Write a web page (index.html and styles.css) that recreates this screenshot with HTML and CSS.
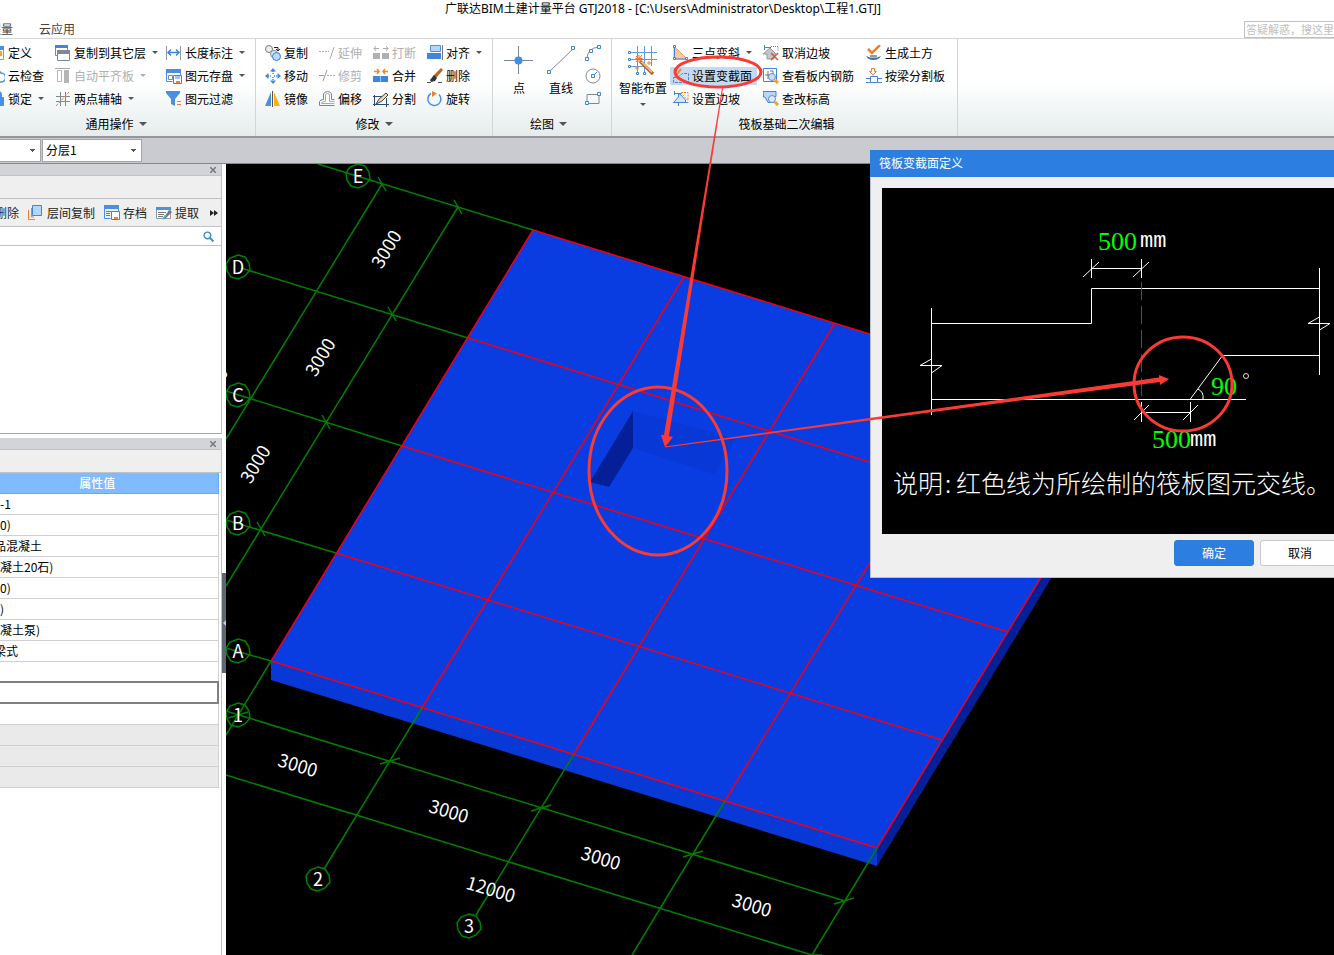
FILE: index.html
```html
<!DOCTYPE html>
<html lang="zh-CN">
<head>
    <meta charset="UTF-8">
    <meta name="viewport" content="width=device-width, initial-scale=1.0">
    <title>广联达BIM土建计量平台 GTJ2018</title>
    <link rel="stylesheet" href="styles.css">
</head>
<body>
<header class="title-bar">广联达BIM土建计量平台 GTJ2018 - [C:\Users\Administrator\Desktop\工程1.GTJ]</header>

<nav class="tabs">
    <a href="#">工程量</a>
    <a href="#">云应用</a>
    <input class="help-search" type="text" aria-label="答疑解惑" placeholder="答疑解惑，搜这里">
</nav>

<div class="ribbon">
    <section class="group group-common">
        <div class="group-body">
            <div class="col col-a">
                <button><svg class="icon" viewBox="0 0 16 16"><path d="M1 1h14v4H1z" fill="#4a90e2"/><path d="M1.500 5v9.500h13V5" fill="#fff" stroke="#8c9aa3"/><path d="M8 6h5v5H8z" fill="#f5a623"/></svg>定义</button>
                <button><svg class="icon" viewBox="0 0 16 16"><path d="M5 14a4 4 0 0 1 0-8 4 4 0 0 1 7-1 4.500 4.500 0 0 1 0 9z" fill="none" stroke="#4a90e2" stroke-width="1.500"/></svg>云检查</button>
                <button><svg class="icon" viewBox="0 0 16 16"><path d="M6 7V4a3 3 0 0 1 6 0v3" fill="none" stroke="#4a90e2" stroke-width="2"/><rect x="3" y="6" width="12" height="9" rx="1" fill="#4a90e2"/></svg>锁定<i class="caret"></i></button>
            </div>
            <div class="col col-b">
                <button><svg class="icon" viewBox="0 0 16 16"><path d="M.5 2v8.500H3M12.500 3v3" fill="none" stroke="#4a90e2"/><path d="M0 0h13v3H0z" fill="#3f85dc"/><path d="M2.500 7v8.500h12V7" fill="#fff" stroke="#7b8a96"/><path d="M2 5h13v4H2z" fill="#7b8a96"/></svg>复制到其它层<i class="caret"></i></button>
                <button disabled><svg class="icon" viewBox="0 0 16 16"><path d="M0 .5h15" stroke="#aaa"/><path d="M2.500 2.500h4v11h-4z" fill="none" stroke="#b5b5b5"/><path d="M9 2h5v13H9z" fill="#b5b5b5"/></svg>自动平齐板<i class="caret"></i></button>
                <button><svg class="icon" viewBox="0 0 16 16"><path d="M5.500 1v14M10.500 1v14M1 5.500h14M1 10.500h14" stroke="#7b8a96"/><path d="M1 15 14 1" stroke="#f08030" stroke-dasharray="3 1"/></svg>两点辅轴<i class="caret"></i></button>
            </div>
            <div class="col col-c">
                <button><svg class="icon" viewBox="0 0 16 16"><path d="M.5 1v14M14.500 1v14" stroke="#8c9aa3"/><path d="M2 7.500h11M5 4.500l-3 3 3 3M10 4.500l3 3-3 3" fill="none" stroke="#3f85dc" stroke-width="1.500"/></svg>长度标注<i class="caret"></i></button>
                <button><svg class="icon" viewBox="0 0 16 16"><path d="M.5 4v9.500h6M14.500 4v3" fill="none" stroke="#4a90e2"/><path d="M0 1h15v4H0z" fill="#4a90e2"/><path d="M2.500 7.500h4v4h-4z" fill="none" stroke="#7b8a96"/><path d="M7.500 7.500h8v8h-8z" fill="#fff" stroke="#3f85dc"/><path d="M9 8h5v3H9z" fill="#9cc5f5"/><path d="M10 13h4v2h-4z" fill="#f08030"/></svg>图元存盘<i class="caret"></i></button>
                <button><svg class="icon" viewBox="0 0 16 16"><path d="M0 0h14v2L9 8v7l-4-2V8L0 2z" fill="#4a90e2"/><path d="M11 10.500h4M11 13.500h4" stroke="#f08030"/></svg>图元过滤</button>
            </div>
        </div>
        <h2>通用操作<i class="caret big"></i></h2>
    </section>

    <section class="group group-edit">
        <div class="group-body">
            <div class="col col-d">
                <button><svg class="icon" viewBox="0 0 16 16"><circle cx="4" cy="4" r="3.500" fill="#eee" stroke="#777"/><path d="M9 2.500h4v3M11 4l2 2 2-2" fill="none" stroke="#222"/><circle cx="9" cy="9" r="3.500" fill="#eee" stroke="#7b8a96"/><circle cx="11.500" cy="11.500" r="4" fill="#b9d8fb" stroke="#2f7fd4"/></svg>复制</button>
                <button><svg class="icon" viewBox="0 0 16 16"><path d="M8 0l3 3.500H5zM8 16l3-3.500H5zM0 8l3.500-3v6zM16 8l-3.500-3v6z" fill="#3f85dc"/><path d="M8 3v4M8 9v4M3 8h4M9 8h4" stroke="#3f85dc" stroke-width="1.500" stroke-dasharray="1 1"/></svg>移动</button>
                <button><svg class="icon" viewBox="0 0 16 16"><path d="M6 1v14H0z" fill="#4a90e2"/><path d="M7.500 0v16" stroke="#555"/><path d="M9 1v14h6z" fill="#f7b21a"/></svg>镜像</button>
            </div>
            <div class="col col-d">
                <button disabled><svg class="icon" viewBox="0 0 16 16"><path d="M0 6.500h10" stroke="#aaa" stroke-dasharray="2 1"/><path d="M11 14l4-12" stroke="#aaa"/></svg>延伸</button>
                <button disabled><svg class="icon" viewBox="0 0 16 16"><path d="M0 7.500h5M4 13l4-11" stroke="#999"/><path d="M8 7.500h8" stroke="#aaa" stroke-dasharray="2 1"/></svg>修剪</button>
                <button><svg class="icon" viewBox="0 0 16 16"><path d="M15.500 14.500H.5v-4q1-2 4-2V3q1-2.500 4-2.500t4 2.500v5.500h3" fill="none" stroke="#4a90e2"/><path d="M15.500 12.500h-13q0-2 4-2V4q0-1.500 2-1.500t2 1.500v6.500h5" fill="#fff" stroke="#e3a33b"/></svg>偏移</button>
            </div>
            <div class="col col-d">
                <button disabled><svg class="icon" viewBox="0 0 16 16"><path d="M0 8h7v6H0zM9 8h7v6H9z" fill="#b0b0b0"/><path d="M1 3.500h5M15 3.500h-5M3 1 1 3.500 3 6M13 1l2 2.500L13 6" fill="none" stroke="#aaa"/></svg>打断</button>
                <button><svg class="icon" viewBox="0 0 16 16"><path d="M0 8h15v6H0z" fill="#3f85dc"/><path d="M7.500 8v6" stroke="#9cc5f5"/><path d="M1 3.500h5M15 3.500h-5M4 1l2 2.500L4 6M12 1l-2 2.500L12 6" fill="none" stroke="#f08a1d" stroke-width="1.500"/></svg>合并</button>
                <button><svg class="icon" viewBox="0 0 16 16"><path d="M0 5.500h10M1.500 4v11M0 13.500h16M13.500 7v9" fill="none" stroke="#2c4a75"/><path d="M3 13l3-5 7-6 2 2-6 6z" fill="#f1d5b0" stroke="#444"/></svg>分割</button>
            </div>
            <div class="col col-e">
                <button><svg class="icon" viewBox="0 0 16 16"><path d="M3.500.5h10v6h-10z" fill="#b5d5fa" stroke="#4a90e2"/><path d="M0 8h14v6H0z" fill="#3f85dc"/><path d="M15.500 0v15" stroke="#777"/></svg>对齐<i class="caret"></i></button>
                <button><svg class="icon" viewBox="0 0 16 16"><path d="M14 0l2 2-7 8-3-2z" fill="#b5652b"/><path d="M7 7l3 3-2 3-4 1-1-2z" fill="#333"/><path d="M0 14.500h4M11 14.500h4" stroke="#555"/></svg>删除</button>
                <button><svg class="icon" viewBox="0 0 16 16"><path d="M4 2.500a6.500 6.500 0 1 0 8 1" fill="none" stroke="#4a90e2" stroke-width="1.500"/><path d="M5 0l5 2.500L5 6z" fill="#f08030"/></svg>旋转</button>
            </div>
        </div>
        <h2>修改<i class="caret big"></i></h2>
    </section>

    <section class="group group-draw">
        <div class="group-body">
            <button class="large"><svg class="icon-large" viewBox="0 0 30 30"><path d="M14.500 1v28M0 15.500h29" stroke="#7b8a96"/><circle cx="14.500" cy="15.500" r="4" fill="#3f8ee8"/></svg>点</button>
            <button class="large"><svg class="icon-large" viewBox="0 0 30 30"><path d="M3 27 27 4" stroke="#7b8a96"/><path d="M1.500 25.500h3v3h-3zM25.500 1.500h3v3h-3z" fill="#fff" stroke="#3f85dc"/></svg>直线</button>
            <div class="col col-shapes">
                <button aria-label="弧"><svg class="icon" viewBox="0 0 16 16"><path d="M2 14Q2 3 14 2" fill="none" stroke="#7b8a96"/><path d="M.5 12.500h3v3h-3zM4.500 4.500h3v3h-3zM12.500.5h3v3h-3z" fill="#fff" stroke="#3f85dc"/></svg></button>
                <button aria-label="圆"><svg class="icon" viewBox="0 0 16 16"><circle cx="8" cy="8" r="7" fill="none" stroke="#7b8a96"/><path d="M8 8l4-4" stroke="#3f85dc"/><path d="M6.500 6.500h3v3h-3z" fill="#fff" stroke="#3f85dc"/></svg></button>
                <button aria-label="矩形"><svg class="icon" viewBox="0 0 16 16"><path d="M2 3.500h12v9H2z" fill="none" stroke="#7b8a96"/><path d="M.5 10.500h3v3h-3zM12.500 1.500h3v3h-3z" fill="#fff" stroke="#3f85dc"/></svg></button>
            </div>
        </div>
        <h2>绘图<i class="caret big"></i></h2>
    </section>

    <section class="group group-raft">
        <div class="group-body">
            <button class="large wide"><svg class="icon-large" viewBox="0 0 30 30"><path d="M9.500 1v28M16.500 1v28M23.500 1v20M1 7.500h28M1 14.500h28M1 21.500h16" stroke="#5a9be8"/><path d="M.5 6.500h2v2h-2zM.5 13.500h2v2h-2zM.5 20.500h2v2h-2zM8.500 27.500h2v2h-2zM15.500 27.500h2v2h-2z" fill="#fff" stroke="#3f85dc"/><path d="M12 16l13 13" stroke="#a86b35" stroke-width="3.500"/><path d="M13 16l11 11" stroke="#f0b478" stroke-width="2"/><path d="M11 10v7M7.500 13.500h7M8 11l6 6M14 10l-6 7" stroke="#f07030"/><path d="M21 16v4M19 18h4M9 21v4M7 23h4" stroke="#f08030"/></svg>智能布置<i class="caret"></i></button>
            <div class="col col-f">
                <button><svg class="icon" viewBox="0 0 16 16"><path d="M1 1v13h13z" fill="#fcc7a0" stroke="#f0a070"/><path d="M1.500 2v12H14" fill="none" stroke="#3f85dc"/><path d="M.5.5h2v2h-2zM.5 12.500h2v2h-2zM12.500 12.500h2v2h-2z" fill="#fff" stroke="#3f85dc"/></svg>三点变斜<i class="caret"></i></button>
                <button class="active"><svg class="icon" viewBox="0 0 16 16"><path d="M.5 9.500h4l5-4h6v9H.5z" fill="none" stroke="#3f85dc" stroke-dasharray="3 1"/><path d="M2 9l6-8" stroke="#f08a1d" stroke-width="2"/></svg>设置变截面</button>
                <button><svg class="icon" viewBox="0 0 16 16"><path d="M1.500 0v4M1 2.500h7M.5 11.500h15M5.500 11v4" stroke="#3f85dc"/><path d="M5.500 3v3L.5 11.500h12V9L7 3z" fill="#d5e6fa" stroke="#3f85dc"/><path d="M8 1.500h7v8L8 2" fill="none" stroke="#f08a1d" stroke-dasharray="2 1"/></svg>设置边坡</button>
            </div>
            <div class="col col-g">
                <button><svg class="icon" viewBox="0 0 16 16"><path d="M1.500 0v5M1 2.500h7" stroke="#3f85dc"/><path d="M7 3l6 6h-2v5H4V9H0z" fill="#c5c8ca" stroke="#999"/><path d="M8 1.500h7v5" fill="none" stroke="#777" stroke-dasharray="1 1"/><path d="M8 8l7 7M15 8l-7 7" stroke="#e05040" stroke-width="1.500"/></svg>取消边坡</button>
                <button><svg class="icon" viewBox="0 0 16 16"><path d="M.5.5h13v13H.5z" fill="#fff" stroke="#3f85dc"/><path d="M2 7h5M5 3v8M7 3h3v4" fill="none" stroke="#777"/><circle cx="9" cy="9" r="3.500" fill="#c8def8" stroke="#6e8fb8"/><path d="M12 12l3 3" stroke="#f5a01d" stroke-width="3"/></svg>查看板内钢筋</button>
                <button><svg class="icon" viewBox="0 0 16 16"><path d="M0 .5h13v5h-2v6H5L2 6H.5z" fill="#b9d6f8" stroke="#3f85dc"/><circle cx="9" cy="8" r="3.500" fill="#dceafb" stroke="#6e8fb8"/><path d="M12 11l3 3" stroke="#f5a01d" stroke-width="3"/></svg>查改标高</button>
            </div>
            <div class="col col-h">
                <button><svg class="icon" viewBox="0 0 16 16"><path d="M2 4l4 4 8-8" fill="none" stroke="#f08030" stroke-width="2.500"/><path d="M4 10h7v2H4z" fill="#999"/><path d="M0 11q2 4 7.500 4T15 11l-4 1.500H4z" fill="#3a72b4"/></svg>生成土方</button>
                <button><svg class="icon" viewBox="0 0 16 16"><path d="M5.500.5h3v3h2L7 7 3.500 3.500h2z" fill="#fff" stroke="#f08030"/><path d="M4.500 8.500h7v6h-7zM0 10.500h4M12 10.500h4M0 14.500h4M12 14.500h4" fill="#fff" stroke="#3f85dc"/></svg>按梁分割板</button>
            </div>
        </div>
        <h2>筏板基础二次编辑</h2>
    </section>
</div>

<div class="layer-bar">
    <select class="floor-select" aria-label="楼层"><option></option></select>
    <select class="layer-select" aria-label="分层"><option>分层1</option></select>
</div>

<main class="workspace">
    <aside class="docks">
        <section class="dock dock-list">
            <div class="dock-title"><button aria-label="关闭"><svg viewBox="0 0 6 6"><path d="M0 0l6 6M6 0L0 6" stroke="#777" stroke-width="1.500"/></svg></button></div>
            <div class="dock-tabs"></div>
            <div class="dock-tools">
                <button class="cut">删除</button>
                <button><svg class="icon" viewBox="0 0 16 16"><path d="M.5 5v9.500H7M3.500 3v9H6" fill="none" stroke="#f08030"/><path d="M4.500.5h9v10h-9z" fill="#b5d5fa" stroke="#3f85dc"/></svg>层间复制</button>
                <button><svg class="icon" viewBox="0 0 16 16"><path d="M.5 3v10.500h6M14.500 3v3" fill="none" stroke="#4a90e2"/><path d="M0 0h15v4H0z" fill="#4a90e2"/><path d="M2 6.500h5M2 8.500h4M2 10.500h4" stroke="#777"/><path d="M7.500 6.500h8v8h-8z" fill="#fff" stroke="#3f85dc"/><path d="M10 12h4v2h-4z" fill="#f08030"/></svg>存档</button>
                <button><svg class="icon" viewBox="0 0 16 16"><path d="M.5 4v9.500h14V4" fill="#fff" stroke="#8c9aa3"/><path d="M0 2h15v3H0z" fill="#4a90e2"/><path d="M2 7.500h8M2 9.500h6M2 11.500h5" stroke="#777"/><path d="M7 14l6-9 3 2-7 7z" fill="#777"/><path d="M7 14l3-4" stroke="#30c0e0" stroke-width="2"/></svg>提取</button>
                <button class="more" aria-label="更多"><svg viewBox="0 0 8 6"><path d="M0 0l4 3-4 3zM4 0l4 3-4 3z" fill="#222"/></svg></button>
            </div>
            <div class="dock-search">
                <input type="text" aria-label="搜索构件">
                <svg viewBox="0 0 10 10"><circle cx="4" cy="4" r="3" fill="none" stroke="#3a90cc" stroke-width="1.300"/><path d="M6 6l3.500 3.500" stroke="#3a90cc" stroke-width="1.800"/></svg>
            </div>
        </section>
        <section class="dock dock-props">
            <div class="dock-title"><button aria-label="关闭"><svg viewBox="0 0 6 6"><path d="M0 0l6 6M6 0L0 6" stroke="#777" stroke-width="1.500"/></svg></button></div>
            <div class="dock-tabs"></div>
            <table class="props">
                <thead><tr><th>属性值</th></tr></thead>
                <tbody>
                    <tr><td>-1</td></tr>
                    <tr><td>0)</td></tr>
                    <tr><td><span class="cut">品混凝土</span></td></tr>
                    <tr><td>凝土20石)</td></tr>
                    <tr><td>0)</td></tr>
                    <tr><td>)</td></tr>
                    <tr><td>凝土泵)</td></tr>
                    <tr><td><span class="cut">梁式</span></td></tr>
                    <tr><td></td></tr>
                    <tr class="current"><td></td></tr>
                    <tr><td></td></tr>
                    <tr class="folded"><td></td></tr>
                    <tr class="folded"><td></td></tr>
                    <tr class="folded"><td></td></tr>
                </tbody>
            </table>
        </section>
    </aside>
    <div class="splitter"><button aria-label="收起"></button></div>

    <div class="viewport">
        <svg class="scene">
            <defs>
                <path id="bubble" d="M0-12 7-10 11-4 12 3 7 9 0 12-7 10-11 4-12-3-8-9z"/>
                <path id="tick-v" d="M-4-7 4 7"/>
                <path id="tick-h" d="M-10 3 10-3"/>
            </defs>
            <g transform="translate(-226 -164)">
                <!-- slab -->
                <path d="M877 848 1138 417v18L877 866z" fill="#051f98"/>
                <path d="M271 661 877 848v18L271 680z" fill="#0838d6"/>
                <path d="M533 230 1138 417 877 848 271 661z" fill="#093de2"/>
                <path d="M633 411 737 439 714 474 633 448z" fill="#0838d6"/>
                <path d="M633 411v37l-24 39-19-5z" fill="#051f98"/>
                <g class="slab-lines">
                    <path d="M533 230 1138 417 877 848 271 661z"/>
                    <path d="M468 338 1073 525M402 446 1008 632M336 553 942 740"/>
                    <path d="M684 277 422 708M835 323 574 754M987 370 725 801"/>
                </g>
                <!-- axes -->
                <g class="axes">
                    <path d="M318 164 533 230M241 268 468 338M226 391 402 446M226 520 336 553M226 648 271 661"/>
                    <path d="M382 184 226 439M458 207 226 586"/>
                    <path d="M271 661 226 735M422 708 324 869M574 754 476 915M725 801 632 955M877 848 812 955"/>
                    <path d="M226 711 845 901M226 775 812 955H822"/>
                    <use href="#tick-v" x="382" y="184"/>
                    <use href="#tick-v" x="458" y="207"/>
                    <use href="#tick-v" x="392" y="314"/>
                    <use href="#tick-v" x="326" y="422"/>
                    <use href="#tick-v" x="261" y="529"/>
                    <use href="#tick-h" x="238" y="715"/>
                    <use href="#tick-h" x="390" y="761"/>
                    <use href="#tick-h" x="541" y="808"/>
                    <use href="#tick-h" x="693" y="854"/>
                    <use href="#tick-h" x="844" y="901"/>
                    <use href="#bubble" x="358" y="176"/>
                    <use href="#bubble" x="238" y="267"/>
                    <use href="#bubble" x="238" y="395"/>
                    <use href="#bubble" x="238" y="523"/>
                    <use href="#bubble" x="238" y="651"/>
                    <use href="#bubble" x="238" y="715"/>
                    <use href="#bubble" x="318" y="879"/>
                    <use href="#bubble" x="469" y="926"/>
                </g>
                <g class="axis-text">
                    <text x="358" y="183">E</text>
                    <text x="238" y="274">D</text>
                    <text x="238" y="402">C</text>
                    <text x="238" y="530">B</text>
                    <text x="238" y="658">A</text>
                    <text x="238" y="722">1</text>
                    <text x="318" y="886">2</text>
                    <text x="469" y="933">3</text>
                    <text transform="translate(386 249) rotate(-59)" y="7">3000</text>
                    <text transform="translate(320 357) rotate(-59)" y="7">3000</text>
                    <text transform="translate(255 464) rotate(-59)" y="7">3000</text>
                    <text transform="translate(210 390) rotate(-59)" y="7">12000</text>
                    <text transform="translate(298 765) rotate(17)" y="7">3000</text>
                    <text transform="translate(449 811) rotate(17)" y="7">3000</text>
                    <text transform="translate(601 858) rotate(17)" y="7">3000</text>
                    <text transform="translate(752 905) rotate(17)" y="7">3000</text>
                    <text transform="translate(491 889) rotate(17)" y="7">12000</text>
                </g>
            </g>
        </svg>
    </div>
</main>

<div class="dialog" role="dialog" aria-labelledby="dialog-title">
    <h1 id="dialog-title">筏板变截面定义</h1>
    <svg class="section-drawing" viewBox="0 0 458 346">
        <g class="section-lines">
            <path d="M49.500 120v107M49.500 135.500h160v-35h228M437.500 80v107M437.500 167.500h-97L308 211.500M49.500 211.500H364"/>
            <path d="M209.500 71v19M259.500 71v19M209.500 80.500h50M201 89l16-15M251 89l16-15"/>
            <path d="M259.500 214v20M308.500 214v20M259.500 224.500h49M252 232l15-15M301 232l15-15"/>
            <path d="M49.500 171 38 177.500h22L49.500 185M437.500 129 426 135.500h22L437.500 142M316 201q6 3 5 10"/>
        </g>
        <path d="M259.500 94v116" stroke="#e01010" stroke-dasharray="18 6"/>
        <g class="section-values">
            <text x="216" y="62">500</text>
            <text x="270" y="260">500</text>
            <text x="329" y="207">90</text>
        </g>
        <g class="section-units">
            <text x="258" y="59">mm</text>
            <text x="308" y="258">mm</text>
            <circle cx="364" cy="188" r="2.500" fill="none" stroke="#f0e0b0"/>
        </g>
        <g class="section-note">
            <text x="11" y="305">说明</text>
            <text x="63" y="305">:</text>
            <text x="74" y="305">红色线为所绘制的筏板图元交线。</text>
        </g>
    </svg>
    <div class="dialog-buttons">
        <button class="primary">确定</button>
        <button>取消</button>
    </div>
</div>

<svg class="markup">
    <ellipse cx="718" cy="72" rx="43" ry="15"/>
    <ellipse cx="658" cy="471" rx="69" ry="84"/>
    <ellipse cx="1183" cy="384" rx="49" ry="47"/>
    <path d="M722 88h1L669 436l4 1-8 10-4-12 3 0z"/>
    <path d="M665 446.500 1159 377.500V375l10 4-9 6v-3L665 447.500z"/>
</svg>
</body>
</html>
```
FILE: styles.css
```css
:root {
    --blue: #2c7fe1;
    --panel: #efefef;
    --bar: #c9cbd0;
    --line: #c0c2c8;
    --mark: #fb3a34;
}

* {
    box-sizing: border-box;
}

body {
    margin: 0;
    height: 100vh;
    display: flex;
    flex-direction: column;
    overflow: hidden;
    position: relative;
    background: #fff;
    color: #000;
    font-family: "Noto Sans CJK SC", "Noto Sans", sans-serif;
    font-size: 12px;
    line-height: 18px;
}

button,
input,
select {
    font: inherit;
    color: inherit;
}

button {
    display: flex;
    align-items: center;
    border: 0;
    padding: 0;
    background: none;
    white-space: nowrap;
}

.title-bar {
    height: 18px;
    padding-right: 8px;
    font-family: "Noto Sans", "Noto Sans CJK SC", sans-serif;
    text-align: center;
}

/* tabs */
.tabs {
    height: 21px;
    display: flex;
    align-items: center;
    gap: 26px;
    margin-left: -23px;
    padding-top: 2px;
    border-bottom: 1px solid #d5d5d5;
}

.tabs a {
    color: #444;
    text-decoration: none;
}

.help-search {
    width: 90px;
    height: 17px;
    margin-left: auto;
    padding: 0 1px;
    border: 1px solid #c0c0c0;
    border-right: 0;
    font-size: 11px;
}

.help-search::placeholder {
    color: #c0c0c0;
}

/* ribbon */
.ribbon {
    height: 97px;
    flex: none;
    display: flex;
    background: linear-gradient(#fff 45%, #e6ecec);
}

.group {
    display: flex;
    flex-direction: column;
    padding-top: 2px;
    border-right: 1px solid #d3d6d8;
}

.group-body {
    display: flex;
    height: 70px;
}

.group h2 {
    display: flex;
    align-items: center;
    justify-content: center;
    height: 25px;
    margin: 0;
    font-size: 12px;
    font-weight: normal;
}

.group-common {
    margin-left: -23px;
    padding-left: 12px;
}

.group-common h2 {
    margin-left: -12px;
}

.group-edit {
    padding-left: 9px;
}

.group-edit h2 {
    margin-left: -9px;
}

.group-draw {
    padding-left: 5px;
}

.group-draw h2 {
    margin-left: -12px;
}

.group-raft {
    padding-left: 4px;
}

.col {
    display: grid;
    grid-template-rows: repeat(3, 23px);
    align-items: center;
    justify-items: start;
}

.col button,
.dock-tools button {
    gap: 3px;
}

.col button:disabled {
    color: #b0b0b0;
}

.col-a { width: 66px; }
.col-b { width: 111px; }
.col-c { width: 89px; }
.col-d { width: 54px; }
.col-e { width: 65px; }
.col-f { width: 90px; }
.col-g { width: 103px; }
.col-h { width: 91px; }

.col-shapes {
    width: 29px;
    padding-left: 3px;
}

.col button.active {
    margin-left: -3px;
    padding: 0 5px 0 3px;
    background: #c5d9f1;
}

.icon {
    width: 16px;
    height: 16px;
    flex: none;
}

.icon-large {
    width: 30px;
    height: 30px;
    margin-bottom: 4px;
}

.large {
    width: 42px;
    flex-direction: column;
    padding-top: 4px;
}

.large.wide {
    width: 54px;
    margin-right: 3px;
}

.large .caret {
    margin: 6px 0 0;
}

.caret {
    border: 3px solid transparent;
    border-top-color: #555;
    border-bottom: 0;
    margin-left: 3px;
}

button:disabled .caret {
    border-top-color: #b0b0b0;
}

.caret.big {
    border-width: 4px;
    border-bottom: 0;
    margin-left: 5px;
}

/* floor and layer bar */
.layer-bar {
    height: 28px;
    flex: none;
    display: flex;
    align-items: center;
    gap: 1px;
    background: var(--bar);
    border-top: 2px solid #94969a;
    border-bottom: 1px solid #85888e;
}

.layer-bar select {
    height: 23px;
    padding: 0 3px 2px;
    border: 1px solid #a5a5a8;
    border-radius: 0;
    appearance: none;
    background:
        linear-gradient(#555, #555) no-repeat right 5px top 9px / 5px 1px,
        linear-gradient(#555, #555) no-repeat right 6px top 10px / 3px 1px,
        linear-gradient(#555, #555) no-repeat right 7px top 11px / 1px 1px,
        #fff;
}

.layer-bar .floor-select {
    width: 41px;
    border-left: 0;
}

.layer-bar .layer-select {
    width: 100px;
}

/* docks */
.workspace {
    flex: 1;
    min-height: 0;
    display: flex;
}

.docks {
    width: 222px;
    flex: none;
    display: flex;
    flex-direction: column;
    gap: 4px;
    color: #222;
}

.dock {
    border-right: 1px solid var(--line);
}

.dock-list {
    height: 270px;
    border-bottom: 1px solid #a5a7ab;
}

.dock-props {
    flex: 1;
}

.dock-title {
    height: 12px;
    display: flex;
    justify-content: flex-end;
    padding-right: 5px;
    background: #d3d4d9;
    border-bottom: 1px solid var(--line);
}

.dock-title svg {
    width: 6px;
    height: 6px;
}

.dock-tabs {
    height: 23px;
    background: var(--panel);
    border-bottom: 1px solid var(--line);
}

.dock-tools {
    height: 28px;
    display: flex;
    align-items: center;
    gap: 9px;
    background: var(--panel);
    border-bottom: 1px solid var(--line);
}

.cut {
    margin-left: -6px;
}

.dock-tools .cut {
    margin-left: -5px;
}

.dock-tools .more svg {
    width: 8px;
    height: 6px;
    margin-left: 2px;
}

.dock-search {
    height: 19px;
    display: flex;
    align-items: center;
    padding-right: 7px;
    border-bottom: 1px solid var(--line);
}

.dock-search input {
    flex: 1;
    min-width: 0;
    height: 16px;
    border: 0;
}

.dock-search svg {
    width: 11px;
    height: 11px;
}

.props {
    width: 219px;
    border-collapse: collapse;
    table-layout: fixed;
    color: #000;
}

.props th,
.props td {
    height: 21px;
    padding: 0;
    line-height: 18px;
    border-right: 1px solid #d0d0d0;
    border-bottom: 1px solid #d0d0d0;
}

.props th {
    height: 20px;
    padding-right: 23px;
    background: #80bbfd;
    border-color: #6aaaf0;
    color: #fff;
    font-weight: 500;
}

.props .folded td {
    background: #eaeaea;
}

.props .current td {
    border: 2px solid #808080;
    border-left: 0;
}

.splitter {
    width: 4px;
    flex: none;
    padding-top: 409px;
}

.splitter button {
    width: 4px;
    height: 100px;
    background: #5d6773;
    justify-content: flex-end;
}

.splitter button::after {
    content: "";
    border: 3px solid transparent;
    border-right-color: #c8ccd0;
    border-left: 0;
}

/* 3D view */
.viewport {
    flex: 1;
    min-width: 0;
    background: #000;
}

.scene {
    display: block;
    width: 100%;
    height: 100%;
}

.slab-lines {
    fill: none;
    stroke: #f00014;
    stroke-width: 1.5px;
}

.axes {
    fill: none;
    stroke: #008000;
    stroke-width: 1.5px;
}

.axis-text {
    fill: #fff;
    font-size: 18px;
    text-anchor: middle;
}

/* dialog */
.dialog {
    position: absolute;
    left: 870px;
    top: 150px;
    width: 482px;
    background: var(--panel);
    border: 1px solid #b8c0cf;
    border-top: 0;
}

.dialog h1 {
    height: 27px;
    margin: 0 -1px;
    padding-left: 9px;
    background: var(--blue);
    color: #fff;
    font-size: 12px;
    font-weight: normal;
    line-height: 26px;
}

.section-drawing {
    display: block;
    width: 458px;
    height: 346px;
    margin: 11px 11px 6px;
    background: #000;
}

.section-lines {
    fill: none;
    stroke: #fff;
}

.section-values {
    fill: #0f0;
    font-family: "Liberation Serif", serif;
    font-size: 26px;
}

.section-units {
    fill: #fff;
    font-family: "Liberation Mono", monospace;
    font-size: 22px;
}

.section-note {
    fill: #fff;
    font-size: 25px;
    font-weight: 300;
}

.dialog-buttons {
    display: flex;
    justify-content: flex-end;
    gap: 6px;
    padding: 0 11px 11px;
}

.dialog-buttons button {
    width: 80px;
    height: 26px;
    justify-content: center;
    border: 1px solid #c5c8cc;
    border-radius: 3px;
    background: #fff;
}

.dialog-buttons .primary {
    background: var(--blue);
    border-color: var(--blue);
    color: #fff;
}

/* red hand markup over the whole window */
.markup {
    position: absolute;
    inset: 0;
    width: 100%;
    height: 100%;
    pointer-events: none;
    fill: var(--mark);
}

.markup ellipse {
    fill: none;
    stroke: var(--mark);
    stroke-width: 3px;
}
```
